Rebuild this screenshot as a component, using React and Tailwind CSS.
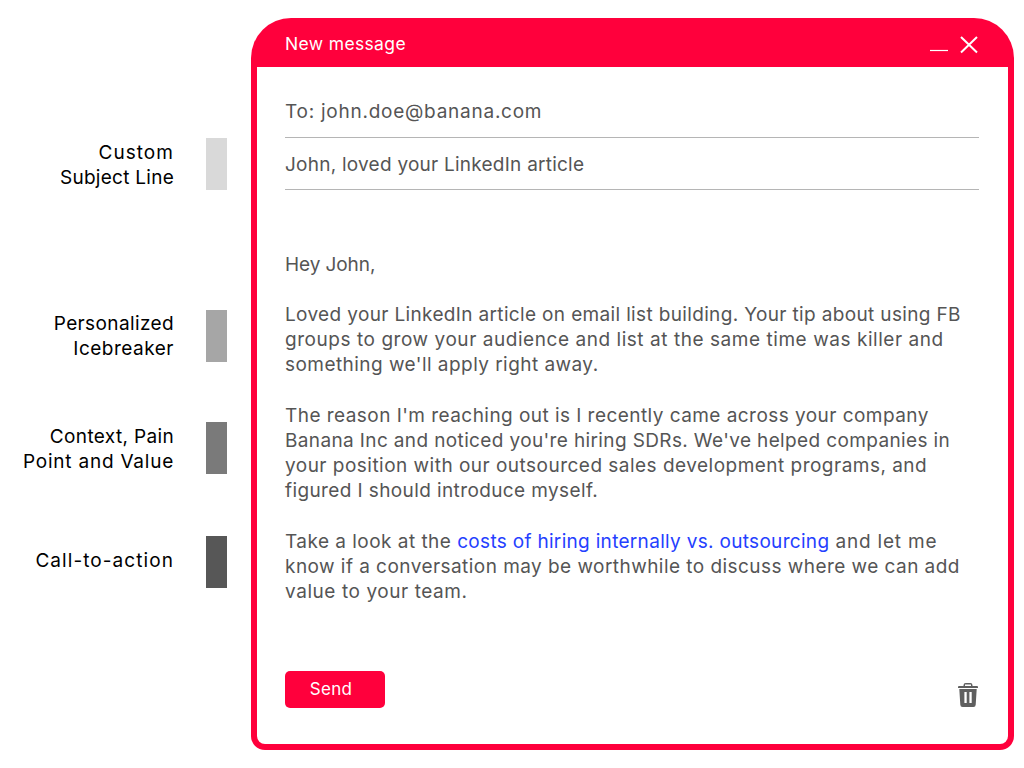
const font = { fontFamily: '"Inter", "Liberation Sans", sans-serif' };

function Label({ lines, bar, mt, pt = "pt-[2px]" }) {
  return (
    <div className={`flex items-start justify-end ${mt}`}>
      <div className={`text-right text-[19px] leading-[25px] text-black mr-[32px] ${pt}`}>
        {lines.map(([l, t]) => (
          <div key={l} className={`whitespace-nowrap ${t}`}>{l}</div>
        ))}
      </div>
      <div className={`w-[21px] h-[52px] mr-[24px] ${bar}`} />
    </div>
  );
}

export default function App() {
  return (
    <div style={font} className="w-[1024px] h-[768px] bg-white flex pt-[18px] overflow-hidden">
      <div className="w-[251px] shrink-0 flex flex-col">
        <Label lines={[["Custom", "tracking-[1.05px]"], ["Subject Line", "tracking-[0.27px]"]]} bar="bg-[#d9d9d9]" mt="mt-[120px]" />
        <Label lines={[["Personalized", "tracking-[0.38px]"], ["Icebreaker", "tracking-[0.5px]"]]} bar="bg-[#a6a6a6]" mt="mt-[120px]" pt="pt-[1px]" />
        <Label lines={[["Context, Pain", "tracking-[0.35px]"], ["Point and Value", "tracking-[0.77px]"]]} bar="bg-[#7a7a7a]" mt="mt-[60px]" />
        <Label lines={[["Call-to-action", "tracking-[1.07px]"]]} bar="bg-[#575757]" mt="mt-[62px]" pt="pt-[12px]" />
      </div>
      <div className="w-[763px] h-[732px] shrink-0 p-[6px] pt-0 bg-[#ff003c] rounded-t-[40px] rounded-b-[14px] flex flex-col">
        <div className="h-[49px] flex items-center justify-between pl-[28px] pr-[30px] pt-[4px] shrink-0 text-white">
          <span className="text-[17.5px] tracking-[0.35px]">New message</span>
          <div className="flex items-end gap-[12px]">
            <svg width="18" height="18" viewBox="0 0 18 18"><path d="M0 14.500h18" stroke="white" strokeWidth="1.2" /></svg>
            <svg width="18" height="18" viewBox="0 0 18 18"><path d="M1 1l16 15.500M17 1L1 16.500" stroke="white" strokeWidth="2" /></svg>
          </div>
        </div>
        <div className="flex-1 flex flex-col bg-white rounded-b-[8px] pl-[28px] pr-[29px] text-[#555] text-[19px] tracking-[0.36px] leading-[25px]">
          <div className="pt-[32px] pb-[13px] border-b border-[#b5b5b5] tracking-[0.75px]">To: john.doe@banana.com</div>
          <div className="pt-[14px] pb-[12px] border-b border-[#b5b5b5] tracking-[0.24px]">John, loved your LinkedIn article</div>
          <div className="mt-[62px] whitespace-nowrap">
            <p className="tracking-[-0.08px]">Hey John,</p>
            <p className="mt-[25px]">
              <span className="tracking-[0.35px]">Loved your LinkedIn article on email list building. Your tip about using FB</span><br />
              <span className="tracking-[0.55px]">groups to grow your audience and list at the same time was killer and</span><br />
              <span className="tracking-[0.45px]">something we'll apply right away.</span>
            </p>
            <p className="mt-[26px]">
              <span className="tracking-[0.45px]">The reason I'm reaching out is I recently came across your company</span><br />
              <span className="tracking-[0.37px]">Banana Inc and noticed you're hiring SDRs. We've helped companies in</span><br />
              <span className="tracking-[0.48px]">your position with our outsourced sales development programs, and</span><br />
              <span className="tracking-[0.39px]">figured I should introduce myself.</span>
            </p>
            <p className="mt-[26px]">
              <span className="tracking-[0.47px]">Take a look at the </span>
              <span className="text-[#2440ff] tracking-[0.31px]">costs of hiring internally vs. outsourcing</span>
              <span className="tracking-[0.8px]"> and let me</span><br />
              <span className="tracking-[0.45px]">know if a conversation may be worthwhile to discuss where we can add</span><br />
              <span className="tracking-[0.57px]">value to your team.</span>
            </p>
          </div>
          <div className="mt-auto mb-[36px] flex items-end justify-between">
            <div className="w-[100px] h-[37px] rounded-[5px] bg-[#ff003c] text-white text-[17px] tracking-[0.3px] pr-[8px] pb-[1px] flex items-center justify-center">Send</div>
            <svg width="20" height="24" viewBox="0 0 20 24" className="mr-[1px] mb-[1px]" fill="#5f5f5f">
              <path fillRule="evenodd" d="M5.500 3V2.200A2.200 2.200 0 0 1 7.700 0h4.600a2.200 2.200 0 0 1 2.200 2.200V3H19a1 1 0 0 1 1 1v1H0V4a1 1 0 0 1 1-1h4.500zM7 3h6V1.500H7V3zM1.300 6h17.400l-1 15.800A2.300 2.300 0 0 1 15.400 24H4.600a2.300 2.300 0 0 1-2.300-2.200L1.300 6zM6.400 9v11h2.300V9H6.400zm5 0v11h2.300V9h-2.300z" />
            </svg>
          </div>
        </div>
      </div>
    </div>
  );
}
